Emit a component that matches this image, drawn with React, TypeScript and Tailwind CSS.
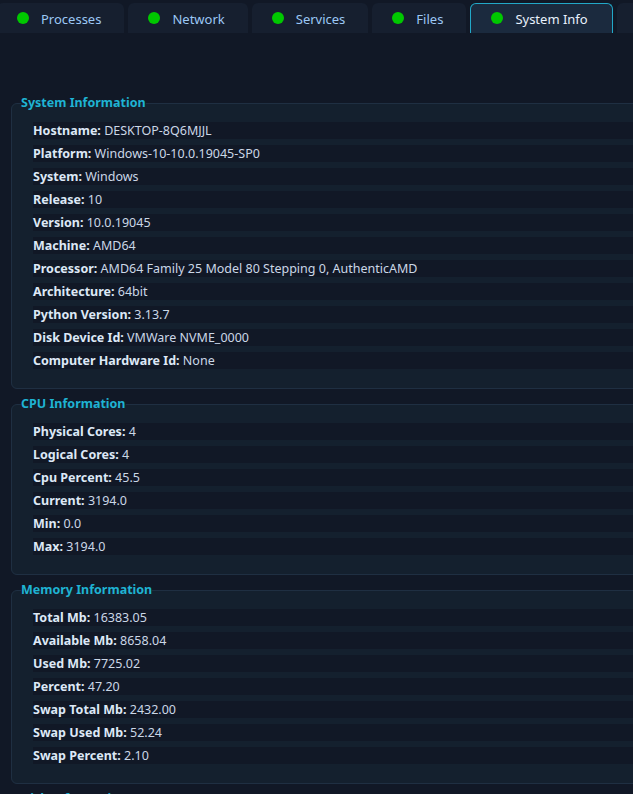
import React from 'react'

type Row = [string, string]

const tabs = ['Processes', 'Network', 'Services', 'Files', 'System Info']

const systemRows: Row[] = [
  ['Hostname', 'DESKTOP-8Q6MJJL'],
  ['Platform', 'Windows-10-10.0.19045-SP0'],
  ['System', 'Windows'],
  ['Release', '10'],
  ['Version', '10.0.19045'],
  ['Machine', 'AMD64'],
  ['Processor', 'AMD64 Family 25 Model 80 Stepping 0, AuthenticAMD'],
  ['Architecture', '64bit'],
  ['Python Version', '3.13.7'],
  ['Disk Device Id', 'VMWare NVME_0000'],
  ['Computer Hardware Id', 'None'],
]

const cpuRows: Row[] = [
  ['Physical Cores', '4'],
  ['Logical Cores', '4'],
  ['Cpu Percent', '45.5'],
  ['Current', '3194.0'],
  ['Min', '0.0'],
  ['Max', '3194.0'],
]

const memoryRows: Row[] = [
  ['Total Mb', '16383.05'],
  ['Available Mb', '8658.04'],
  ['Used Mb', '7725.02'],
  ['Percent', '47.20'],
  ['Swap Total Mb', '2432.00'],
  ['Swap Used Mb', '52.24'],
  ['Swap Percent', '2.10'],
]

const InfoGroup: React.FC<{ title: string; rows: Row[] }> = ({ title, rows }) => {
  return (
    <fieldset className="w-[700px] rounded-[6px] border border-[#1f2f42] bg-[#14202e] pl-[21px] pt-[10px] pb-[19px] mb-[6px]">
      <legend className="ml-[-12px] px-0 h-[18px] text-[12.5px] leading-[18px] font-bold text-[#1fb3d3]">{title}</legend>
      <div className="flex flex-col gap-[6px]">
        {rows.map(([k, v]) => (
          <div key={k} className="h-[17px] bg-[#111826] text-[12.5px] leading-[17px] whitespace-nowrap">
            <span className="font-bold text-[#dde8f6]">{k}:</span>{' '}
            <span className="text-[#cbd7e6]">{v}</span>
          </div>
        ))}
      </div>
    </fieldset>
  )
}

const App: React.FC = () => {
  return (
    <div className="w-[633px] h-[794px] overflow-hidden bg-[#111826] font-['Noto_Sans',sans-serif]">
      <div className="flex gap-[4px] h-[33px] pt-[3px] ml-[-3px]">
        {tabs.map((t) => {
          const active = t === 'System Info'
          return (
            <div
              key={t}
              className={
                active
                  ? 'flex items-center shrink-0 h-[30px] pt-[3px] pl-[20px] pr-[24px] rounded-t-[6px] border border-b-0 border-[#22a8c8] bg-[#1b2a3e] text-[13px] text-[#e8f1fc]'
                  : 'flex items-center shrink-0 h-[30px] pt-[3px] pl-[20px] pr-[23px] rounded-t-[6px] bg-[#161f2f] text-[13px] text-[#9cc8f5]'
              }
            >
              <span className="w-[12px] h-[12px] rounded-full bg-[#00c800] mr-[12px] mb-[4px]" />
              {t}
            </div>
          )
        })}
        <div className="w-[60px] shrink-0 h-[30px] rounded-t-[6px] bg-[#161f2f]" />
      </div>
      <div className="pl-[11px] pt-[61px]">
        <InfoGroup title="System Information" rows={systemRows} />
        <InfoGroup title="CPU Information" rows={cpuRows} />
        <InfoGroup title="Memory Information" rows={memoryRows} />
        <InfoGroup title="Disk Information" rows={[['Total Gb', '']]} />
      </div>
    </div>
  )
}

export default App
